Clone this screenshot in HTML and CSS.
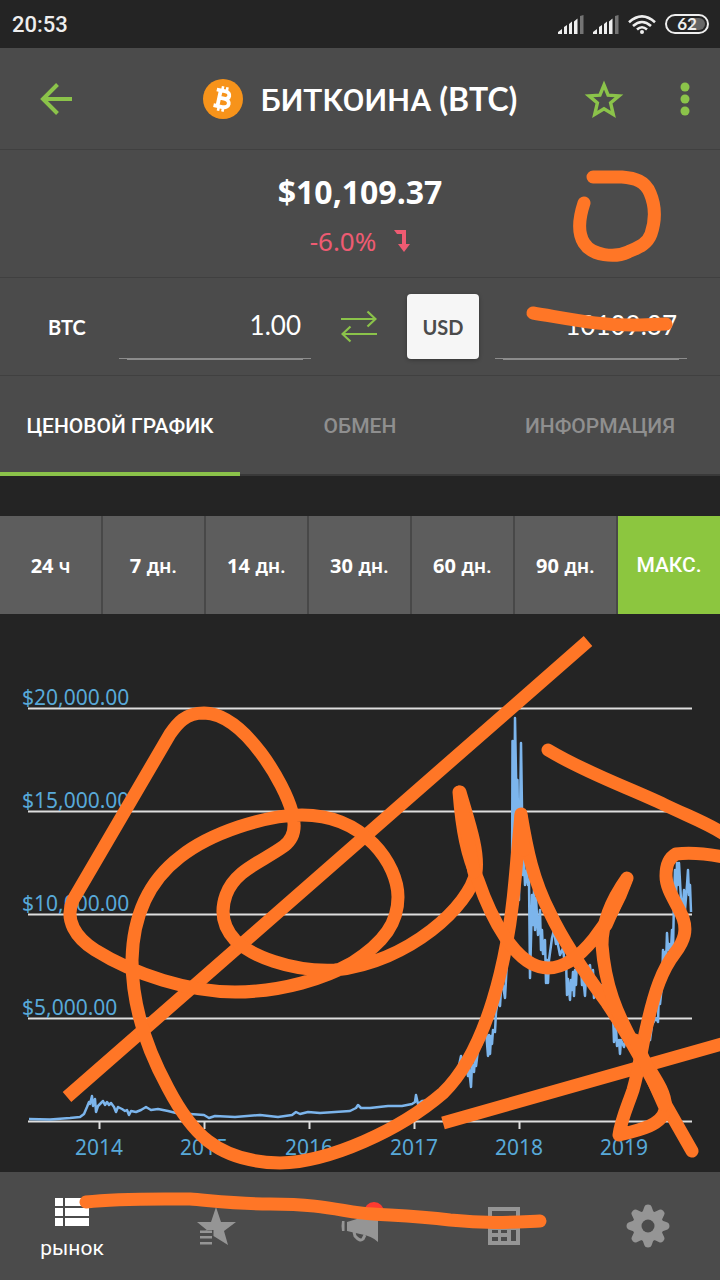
FILE: index.html
```html
<!DOCTYPE html>
<html lang="ru">
<head>
<meta charset="utf-8">
<meta name="viewport" content="width=device-width, initial-scale=1">
<title>Биткоина (BTC)</title>
<link rel="stylesheet" href="styles.css">
</head>
<body>
<div class="screen">
  <div class="status">
    <span class="clock">20:53</span>
    <div class="status-icons">
      <svg width="26" height="19" viewBox="0 0 26 19"><path d="M0 19V17L4 14V19ZM6 19V12L9 10V19ZM11 19V9L14 6.500V19ZM16 19V6.500L19.500 3.500V19Z" fill="#eee"/><path d="M22 19V1L25.500 0V19Z" fill="#747474"/></svg>
      <svg width="26" height="19" viewBox="0 0 26 19"><path d="M0 19V17L4 14V19ZM6 19V12L9 10V19ZM11 19V9L14 6.500V19ZM16 19V6.500L19.500 3.500V19Z" fill="#eee"/><path d="M22 19V1L25.500 0V19Z" fill="#747474"/></svg>
      <svg width="28" height="19" viewBox="0 0 28 19" fill="none" stroke="#eee" stroke-width="2.600"><path d="M1 7.300Q14-4.500 27 7.300M5 11Q14 3 23 11M9 14.500Q14 10 19 14.500"/><circle cx="14" cy="17" r="2" fill="#eee" stroke="none"/></svg>
      <div class="battery">62</div>
    </div>
  </div>

  <header class="header">
    <button class="icon-button back" aria-label="Назад"><svg width="32" height="32" viewBox="0 0 32 32" fill="none" stroke="#8bc34a" stroke-width="4"><path d="M17.500 1.500L3 16L17.500 30.500M2 16H32"/></svg></button>
    <h1 class="title">
      <svg width="40" height="40" viewBox="0 0 40 40"><circle cx="20" cy="20" r="20" fill="#f7931a"/><g transform="rotate(12 20 20)" fill="none" stroke="#fff" stroke-width="3.800"><path d="M12 12H21C27 12 27 19.500 21 19.500H16M21 19.500C28.500 19.500 28.500 28 21 28H12M16 12V28"/><path d="M17.500 7.500V12M22 7.500V12M17.500 28V32.500M22 28V32.500" stroke-width="2.600"/></g></svg>
      <span>БИТКОИНА <span class="latin">(BTC)</span></span>
    </h1>
    <div class="header-actions">
      <button class="icon-button" aria-label="В избранное"><svg width="40" height="40" viewBox="0 0 40 40" fill="none" stroke="#8bc34a" stroke-width="3.400"><path d="M20 6L24.100 16.100L35 16.900L26.600 23.900L29.300 35.500L20 29.700L10.700 35.500L13.400 23.900L5 16.900L15.900 16.100Z"/></svg></button>
      <button class="icon-button" aria-label="Меню"><svg width="10" height="34" viewBox="0 0 10 34" fill="#8bc34a"><circle cx="5" cy="5" r="4.500"/><circle cx="5" cy="17" r="4.500"/><circle cx="5" cy="29" r="4.500"/></svg></button>
    </div>
  </header>

  <section class="price">
    <div class="price-value">$10,109.37</div>
    <div class="price-change">-6.0%<svg width="16" height="22" viewBox="0 0 16 22" fill="#ee5b72"><path d="M0 0H12V14H16L10 22L4 14H8V4H3Z"/></svg></div>
  </section>

  <section class="converter">
    <label class="unit" for="btc">BTC</label>
    <input class="amount" id="btc" value="1.00">
    <button class="icon-button swap" aria-label="Поменять местами"><svg width="36" height="33" viewBox="0 0 36 33" fill="none" stroke="#8bc34a" stroke-width="2.200"><path d="M0 9H34M26.500 1.500L34.500 9L26.500 16.500M36 24H2M9.500 16.500L1.500 24L9.500 31.500"/></svg></button>
    <button class="currency">USD</button>
    <input class="amount" aria-label="USD" value="10109.37">
  </section>

  <nav class="tabs">
    <a class="tab active" href="#chart">ЦЕНОВОЙ ГРАФИК</a>
    <a class="tab" href="#exchange">ОБМЕН</a>
    <a class="tab" href="#info">ИНФОРМАЦИЯ</a>
  </nav>

  <div class="ranges">
    <button class="range"><b>24</b> ч</button>
    <button class="range"><b>7</b> дн.</button>
    <button class="range"><b>14</b> дн.</button>
    <button class="range"><b>30</b> дн.</button>
    <button class="range"><b>60</b> дн.</button>
    <button class="range"><b>90</b> дн.</button>
    <button class="range selected">МАКС.</button>
  </div>

  <svg class="chart" id="chart" viewBox="0 614 720 558">
    <path class="grid-line" d="M28 708.500H692M28 811.500H692M28 914.500H692M28 1018.500H692M28 1121.500H692"/>
    <path class="grid-line" d="M99.500 1121V1129M204.500 1121V1129M309.500 1121V1129M414.500 1121V1129M519.500 1121V1129M624.500 1121V1129"/>
    <polyline class="series" points="29,1119 50,1119.500 70,1118 80,1117 84,1114 87,1107 89,1102 90,1104 92,1096 93,1106 95,1099 96,1112 98,1106 100,1104 103,1101 105,1105 107,1102 109,1105 111,1103 114,1107 116,1112 118,1107 122,1109 125,1111 127,1110 129,1115 131,1111 136,1112 141,1110 146,1107 151,1110 158,1109 168,1111 176,1113 190,1114 204,1115 209,1118 215,1116 235,1117 260,1115 278,1117 292,1115 296,1112 300,1114 308,1112 320,1113 335,1112 350,1111 356,1108 358,1105 361,1108 370,1108 388,1106 402,1106 412,1104 415,1102 416,1095 418,1104 422,1101 432,1100 440,1097 447,1087 452,1080 458,1070 461,1056 463,1063 466,1064 468,1076 469,1068 471,1087 472,1064 474,1072 475,1058 476,1066 478,1050 481,1045 486,1030 488,1056 489,1035 490,1054 491,1036 492,1044 493,1030 495,1032 496,1012 498,1000 500,1006 501,990 503,985 505,998 507,960 510,935 512,900 512.500,741 514,860 515,718 517,830 517.500,780 519,900 521,743 523,875 524,860 525,885 527,870 528,885 529,880 530,978 531,940 532,895 533,925 534,890 535,930 536,898 538,935 540,910 541,950 542,930 543,954 545,940 546,983 547,960 548,983 549,960 552,938 554,930 556,944 557,930 558,945 560,955 563,948 565,966 566,960 567,995 568,979 570,1000 571,980 572,990 573,972 574,996 575,970 576,985 577,960 579,949 580,950 581,965 582,985 583,976 585,996 586,975 588,968 590,965 592,990 593,970 594,998 595,978 596,996 600,985 607,988 610,992 611,1018 613,1012 614,1042 616,1028 617,1046 619,1040 620,1054 621,1040 624,1047 627,1034 631,1041 635,1045 643,1044 648,1038 650,1040 652,1025 656,1018 658,1022 659,990 660,1004 662,985 663,950 664,970 665,952 666,965 667,933 668,950 669,944 671,950 672,930 673,950 674,900 675,870 676,900 677,863 678,885 679,863 681,900 683,905 684,890 685,910 687,885 688,870 689,895 690,885 691,912"/>
    <g class="axis">
      <text x="22" y="705">$20,000.00</text>
      <text x="22" y="808">$15,000.00</text>
      <text x="22" y="911">$10,000.00</text>
      <text x="22" y="1015">$5,000.00</text>
      <g text-anchor="middle">
        <text x="99" y="1155">2014</text>
        <text x="204" y="1155">2015</text>
        <text x="309" y="1155">2016</text>
        <text x="414" y="1155">2017</text>
        <text x="519" y="1155">2018</text>
        <text x="624" y="1155">2019</text>
      </g>
    </g>
  </svg>

  <nav class="bottom-nav">
    <a class="nav-item active" href="#market">
      <svg width="34" height="28" viewBox="0 0 34 28" fill="#fff"><path d="M0 0H8V8H0ZM10 0H34V8H10ZM0 10H8V18H0ZM10 10H34V18H10ZM0 20H8V28H0ZM10 20H34V28H10Z"/></svg>
      <span>рынок</span>
    </a>
    <a class="nav-item" href="#favorites" aria-label="Избранное"><svg width="40" height="40" viewBox="0 0 40 40" fill="#959595"><path d="M20 1L25 16H40L28 25L32 39L17.500 30V24H9L12 25L1 16H15Z"/><path d="M4 24.500H16V27H4ZM4 30H16V32.500H4ZM4 36H16V38.500H4Z"/></svg></a>
    <a class="nav-item" href="#news" aria-label="Новости"><svg class="news-icon" width="40" height="40" viewBox="0 0 40 40" fill="#959595"><circle cx="34" cy="6" r="10" fill="#ff3b30"/><path d="M7 16L20 12Q32 9 38 4V36Q32 30 20 28L7 25Z"/><path d="M2 15H4.500V25H2Q1 20 2 15Z"/><path d="M14 26L15 30Q20 36 23 33L25 29" fill="none" stroke="#959595" stroke-width="3"/></svg></a>
    <a class="nav-item" href="#portfolio" aria-label="Портфель"><svg width="32" height="38" viewBox="0 0 32 38"><path fill="#959595" fill-rule="evenodd" d="M0 0H32V38H0ZM4 4V19H28V4ZM4 23V26H10V23ZM13 23V26H19V23ZM4 30V34H10V30ZM13 30V34H19V30ZM23 23V34H28V23Z"/></svg></a>
    <a class="nav-item" href="#settings" aria-label="Настройки"><svg width="44" height="44" viewBox="-22 -22 44 44"><g fill="#959595"><circle r="15.500"/><path id="tooth" d="M-5.500-14L-3.500-19.500Q-3-21.500 0-21.500Q3-21.500 3.500-19.500L5.500-14V14L3.500 19.500Q3 21.500 0 21.500Q-3 21.500-3.500 19.500L-5.500 14Z"/><use href="#tooth" transform="rotate(45)"/><use href="#tooth" transform="rotate(90)"/><use href="#tooth" transform="rotate(135)"/></g><circle r="6.500" fill="#4b4b4b"/></svg></a>
  </nav>

  <svg class="ink" viewBox="0 0 720 1280" aria-hidden="true">
    <path d="M593 177H622C635 178 645 181 650 193C656 207 655 222 651 234C647 245 637 248 628 252C615 258 592 256 584 243C577 232 580 215 584 203"/>
    <path d="M533 313C570 319 600 326 640 325L666 324"/>
    <path class="ruler" d="M67 1097L588 641M443 1123L722 1044"/>
    <path d="M548 750C590 775 630 788 665 805C690 817 705 822 724 834"/>
    <path d="M460 792C468 820 479 850 476 872C470 905 410 962 335 970C290 972 250 955 235 940C223 927 220 912 226 895C235 870 262 862 284 846C297 836 295 822 292 812C285 785 245 714 204 713C185 713 177 724 170 734L73 900C64 920 76 938 95 950C135 975 190 992 235 992C283 992 325 978 352 963C385 942 398 922 398 897C398 865 365 815 302 815C265 815 210 833 180 857C150 880 133 915 132 960C132 1010 150 1055 168 1088C190 1130 215 1162 280 1163C330 1162 400 1130 443 1093C487 1050 508 960 515 880L521 814C527 850 533 880 550 913C565 945 590 980 607 1003C620 1022 648 1070 663 1100L692 1151"/>
    <path d="M459 792C462 830 467 855 478 880C490 915 515 968 548 968C580 968 612 920 627 878C615 895 602 920 602 945C605 985 616 1013 636 1048C655 1078 668 1095 665 1110C662 1125 640 1130 619 1135C621 1120 628 1105 633 1090C640 1065 642 1045 647 1025C655 990 662 970 675 953C685 940 687 930 683 918C677 903 666 890 666 876C666 864 669 858 676 854C692 852 708 854 724 857"/>
    <path d="M460 795L474 872M521 816L524 850M625 882L606 925M635 1040L664 1105"/>
    <path d="M86 1202C120 1198 160 1199 190 1199C215 1201 240 1204 270 1204C330 1204 345 1213 373 1214C410 1216 420 1216 450 1220C490 1224 515 1222 540 1221"/>
  </svg>
</div>
</body>
</html>
```
FILE: styles.css
```css
* { box-sizing: border-box; }
body {
  margin: 0;
  background: #242424;
  color: #fff;
  font-family: Roboto, "Noto Sans", sans-serif;
}
button { border: 0; padding: 0; margin: 0; background: none; color: inherit; font-family: inherit; }
a { color: inherit; text-decoration: none; }
svg { display: block; }

.screen { position: relative; overflow: hidden; }

.status {
  display: flex;
  align-items: center;
  justify-content: space-between;
  height: 48px;
  padding: 0 11px 0 12px;
}
.clock { font-size: 22px; font-weight: 500; color: #eee; }
.status-icons { display: flex; align-items: center; gap: 9px; }
.battery {
  width: 44px;
  height: 20px;
  border: 2px solid #eee;
  border-radius: 10px;
  background: linear-gradient(90deg, #242424 60%, #666 60%) content-box;
  padding: 2px;
  font: 700 17px/12px Lato, sans-serif;
  text-align: center;
  color: #eee;
}

.header {
  display: grid;
  grid-template-columns: 1fr auto 1fr;
  align-items: center;
  height: 102px;
  padding: 0 30px 0 40px;
  background: #4b4b4b;
  border-bottom: 1px solid #404040;
}
.icon-button { display: grid; place-items: center; cursor: pointer; }
.back { justify-self: start; }
.title {
  display: flex;
  align-items: center;
  gap: 18px;
  margin: 0;
  padding-right: 10px;
  font-size: 32px;
  font-weight: 500;
  white-space: nowrap;
}
.latin { font-family: Lato, sans-serif; font-weight: 700; }
.header-actions { display: flex; align-items: center; justify-content: flex-end; gap: 56px; }

.price {
  display: flex;
  flex-direction: column;
  align-items: center;
  height: 128px;
  padding-top: 20px;
  background: #4b4b4b;
  border-bottom: 1px solid #404040;
}
.price-value { font: 700 32px/44px "Noto Sans", sans-serif; }
.price-change {
  display: flex;
  align-items: center;
  gap: 18px;
  font: 400 26px/54px "Noto Sans", sans-serif;
  color: #ee5b72;
}

.converter {
  display: grid;
  grid-template-columns: 119px 1fr 96px 72px 16px 1fr;
  align-items: center;
  height: 98px;
  padding-right: 33px;
  background: #4b4b4b;
  border-bottom: 1px solid #404040;
}
.unit { padding-left: 48px; font: 700 20px/24px Lato, sans-serif; }
.amount {
  width: 100%;
  min-width: 0;
  height: 66px;
  padding: 0 10px 4px 0;
  border: 0;
  border-radius: 0;
  color: #fff;
  font: 400 26px/32px Lato, sans-serif;
  text-align: right;
  background:
    linear-gradient(#8c8c8c, #8c8c8c) center bottom 1px / 100% 1px no-repeat,
    linear-gradient(#8c8c8c, #8c8c8c) center bottom / calc(100% - 16px) 2px no-repeat;
}
.amount:last-child { grid-column: 6; }
.currency {
  height: 65px;
  border-radius: 4px;
  background: #f6f6f6;
  color: #4b4b4b;
  font: 700 20px/24px Lato, sans-serif;
  box-shadow: 0 1px 4px rgba(0, 0, 0, .3);
}

.tabs {
  display: grid;
  grid-template-columns: repeat(3, 1fr);
  height: 100px;
  background: #4b4b4b;
}
.tab {
  display: grid;
  place-items: center;
  padding-top: 2px;
  border-bottom: 2px solid #393939;
  font-size: 21px;
  font-weight: 500;
  color: #8f8f8f;
}
.tab.active { border-bottom: 4px solid #8bc34a; padding-top: 4px; color: #fff; }

.ranges {
  display: grid;
  grid-template-columns: repeat(6, 1fr) 102px;
  height: 98px;
  margin-top: 40px;
}
.range {
  border-right: 2px solid #484848;
  background: #5d5d5d;
  font-size: 21px;
  font-weight: 500;
}
.range b { font-family: "Noto Sans", sans-serif; font-size: 20px; }
.range.selected { border: 0; background: #8cc63f; }

.chart { width: 100%; height: auto; }
.grid-line { stroke: #dedede; stroke-width: 2; }
.series { fill: none; stroke: #7cb5ec; stroke-width: 2.5; stroke-linejoin: round; }
.axis { font-family: "Noto Sans", sans-serif; font-size: 21px; fill: #58a9d9; }

.bottom-nav {
  display: grid;
  grid-template-columns: repeat(5, 1fr);
  height: 108px;
  background: #4b4b4b;
}
.nav-item {
  display: flex;
  flex-direction: column;
  align-items: center;
  justify-content: center;
  gap: 10px;
  font-size: 21px;
  line-height: 24px;
}
.nav-item.active { padding-top: 6px; }
.news-icon { overflow: visible; }

.ink {
  position: absolute;
  top: 0;
  left: 0;
  width: 100%;
  height: auto;
  fill: none;
  stroke: #ff7626;
  stroke-width: 13;
  stroke-linecap: round;
  stroke-linejoin: round;
  pointer-events: none;
}
.ruler { stroke-linecap: butt; }
```
